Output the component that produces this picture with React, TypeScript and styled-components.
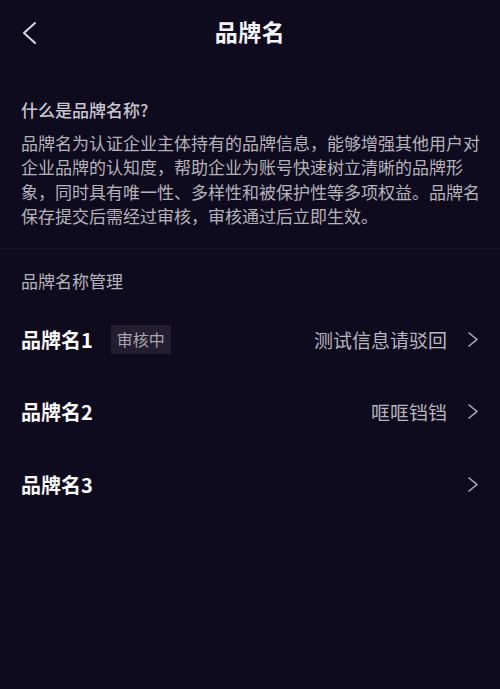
import React from "react";
import styled, {createGlobalStyle} from "styled-components";

const GlobalStyle = createGlobalStyle`
  html, body {
    margin: 0;
    padding: 0;
    background: #0f0b1e;
  }
  body {
    font-family: "Noto Sans CJK SC", "Noto Sans", sans-serif;
  }
`

const Page = styled.div`
  width: 500px;
  min-height: 689px;
  background: #0f0b1e;
  color: #fff;
  box-sizing: border-box;
`

const Header = styled.header`
  position: relative;
  height: 62px;
  display: flex;
  align-items: center;
  justify-content: center;
`

const BackButton = styled.button`
  position: absolute;
  left: 18px;
  top: 18px;
  width: 22px;
  height: 30px;
  padding: 0;
  border: none;
  background: none;
  display: flex;
  align-items: center;
  justify-content: center;
  color: #d8d6dc;
  cursor: pointer;
`

const Title = styled.h1`
  margin: 0;
  font-size: 23px;
  font-weight: 700;
  color: #f4f3f6;
  letter-spacing: 0.5px;
`

const Intro = styled.section`
  padding: 36px 21px 20px;
  border-bottom: 1px solid rgba(255, 255, 255, 0.04);
`

const IntroTitle = styled.h2`
  margin: 0 0 9px;
  font-size: 17px;
  line-height: 24px;
  font-weight: 500;
  color: #c9c6ce;
`

const IntroText = styled.p`
  margin: 0;
  font-size: 17px;
  line-height: 24.3px;
  color: #b5b2ba;
  white-space: nowrap;
`

const SectionTitle = styled.h3`
  margin: 0;
  padding: 20px 21px 0;
  font-size: 17px;
  line-height: 24px;
  font-weight: 400;
  color: #b7b4bc;
`

const List = styled.ul`
  list-style: none;
  margin: 0;
  padding: 10px 0 0;
`

const Row = styled.li`
  height: 72.5px;
  padding: 0 22px 0 21px;
  display: flex;
  align-items: center;
  column-gap: 18px;
  cursor: pointer;
`

const Name = styled.span`
  font-size: 20px;
  font-weight: 700;
  color: #fbfafc;
  white-space: nowrap;
`

const Badge = styled.span`
  height: 29px;
  padding: 0 6px;
  display: flex;
  align-items: center;
  background: #221e30;
  font-size: 16px;
  color: #aaa7b0;
`

const Value = styled.span`
  margin-left: auto;
  font-size: 19px;
  color: #b8b5bd;
  white-space: nowrap;
`

const Arrow = styled.span<{ $alone: boolean }>`
  ${props => props.$alone ? 'margin-left: auto;' : ''}
  display: flex;
  align-items: center;
  color: #b0adb5;
  padding-left: 3px;
`

const Chevron = ({dir, w, h, stroke}: { dir: 'left' | 'right', w: number, h: number, stroke: number }) => (
  <svg width={w} height={h} viewBox={`0 0 ${w} ${h}`} fill="none">
    <polyline
      points={dir === 'left'
        ? `${w - 1},1 1,${h / 2} ${w - 1},${h - 1}`
        : `1,1 ${w - 1},${h / 2} 1,${h - 1}`}
      stroke="currentColor"
      strokeWidth={stroke}
      strokeLinecap="round"
      strokeLinejoin="round"
    />
  </svg>
)

type BrandType = {
  name: string,
  status?: string,
  value?: string,
}

const brands: BrandType[] = [
  {name: '品牌名1', status: '审核中', value: '测试信息请驳回'},
  {name: '品牌名2', value: '哐哐铛铛'},
  {name: '品牌名3'},
]

const introLines = [
  '品牌名为认证企业主体持有的品牌信息，能够增强其他用户对',
  '企业品牌的认知度，帮助企业为账号快速树立清晰的品牌形',
  '象，同时具有唯一性、多样性和被保护性等多项权益。品牌名',
  '保存提交后需经过审核，审核通过后立即生效。',
]

export default function App() {
  return (
    <Page>
      <GlobalStyle/>
      <Header>
        <BackButton aria-label="返回">
          <Chevron dir="left" w={13} h={22} stroke={2}/>
        </BackButton>
        <Title>品牌名</Title>
      </Header>

      <Intro>
        <IntroTitle>什么是品牌名称?</IntroTitle>
        <IntroText>
          {introLines.map((line, i) => (
            <React.Fragment key={i}>
              {line}
              {i < introLines.length - 1 && <br/>}
            </React.Fragment>
          ))}
        </IntroText>
      </Intro>

      <SectionTitle>品牌名称管理</SectionTitle>
      <List>
        {brands.map(brand => (
          <Row key={brand.name}>
            <Name>{brand.name}</Name>
            {brand.status && <Badge>{brand.status}</Badge>}
            {brand.value && <Value>{brand.value}</Value>}
            <Arrow $alone={!brand.value}>
              <Chevron dir="right" w={10} h={15} stroke={1.6}/>
            </Arrow>
          </Row>
        ))}
      </List>
    </Page>
  );
}
